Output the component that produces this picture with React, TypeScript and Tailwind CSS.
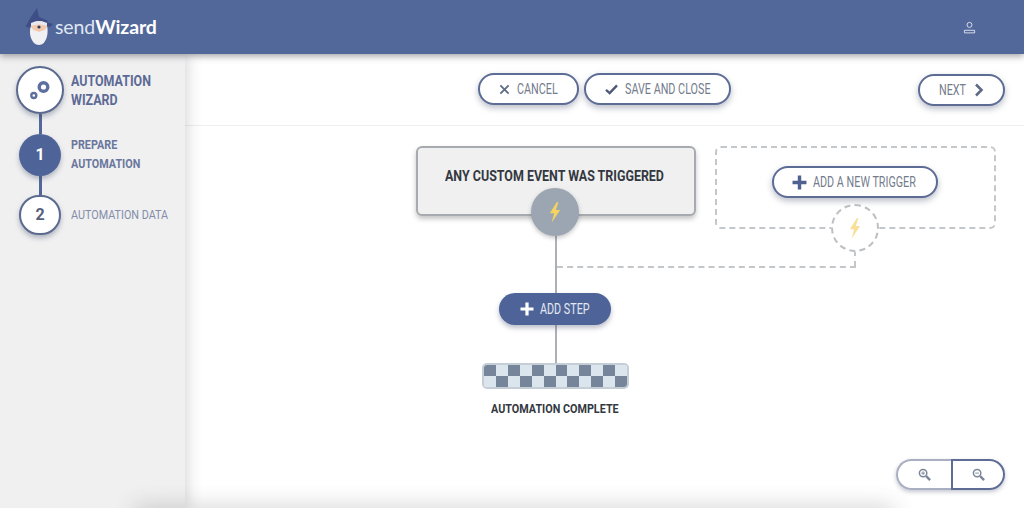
import React from "react";

const font = { fontFamily: "Roboto, 'Liberation Sans', sans-serif" };

function Bolt({ className }: { className: string }) {
  return (
    <svg viewBox="0 0 14 24" className={className} fill="currentColor">
      <path d="M9 0 L1 13 L6 13 L3 24 L13 9 L8 9 L11 0 Z" />
    </svg>
  );
}

function Plus({ className }: { className: string }) {
  return (
    <svg viewBox="0 0 14 14" className={className} fill="currentColor">
      <path d="M5.4 0.5 h3.2 v4.9 h4.9 v3.2 h-4.9 v4.9 h-3.2 v-4.9 h-4.9 v-3.2 h4.9 z" />
    </svg>
  );
}

function Zoom({ minus }: { minus?: boolean }) {
  return (
    <svg viewBox="0 0 14 14" className="w-[13px] h-[13px] text-[#7b8699]" fill="none" stroke="currentColor">
      <circle cx="5.5" cy="5.5" r="4" strokeWidth="1.6" />
      <path d="M8.8 8.8 L13 13" strokeWidth="2.6" />
      <path d={minus ? "M3.5 5.5 h4" : "M3.5 5.5 h4 M5.5 3.5 v4"} strokeWidth="1" />
    </svg>
  );
}

function Logo() {
  return (
    <svg viewBox="0 0 30 38" className="w-[30px] h-[38px] shrink-0">
      <path d="M12 0 L4 12 L1 18 L8 17 L24 13 L14 9 Z" fill="#3d4f86" />
      <path d="M0 18 Q14 10 28 16 L25 19 Q14 15 4 20 Z" fill="#3d4f86" />
      <ellipse cx="14" cy="19" rx="8" ry="6" fill="#f2c9ad" />
      <path d="M6 18 C3 26 7 37 14 37 C21 37 24 26 22 18 C20 24 17 22 14 24 C11 22 8 24 6 18 Z" fill="#f1f1f3" />
      <path d="M6 15 Q14 11 22 15 L22 18 Q14 15 6 18 Z" fill="#e8e8ee" />
      <circle cx="14" cy="19" r="1.6" fill="#2f3a5e" />
    </svg>
  );
}

const pill =
  "flex items-center justify-center rounded-full border-2 border-[#5d6c94] bg-white h-[32px] shadow-[0_3px_6px_rgba(60,70,100,0.35)] text-[#747c8c] text-[14px]";
const narrow = "block whitespace-nowrap origin-left scale-x-[0.83] text-left";
const narrowPill = "block whitespace-nowrap origin-left scale-x-[0.77] text-left";

function Checker() {
  const cells = Array.from({ length: 24 }, (_, i) => i);
  return (
    <div className="grid grid-cols-12 grid-rows-2 w-full h-full rounded-[5px] overflow-hidden border-2 border-[#c5ced6]">
      {cells.map((i) => {
        const row = Math.floor(i / 12);
        const dark = (i + row) % 2 === 0;
        return <div key={i} className={dark ? "bg-[#76859a]" : "bg-[#dbe5ee]"} />;
      })}
    </div>
  );
}

export default function App() {
  return (
    <div className="w-[1024px] h-[508px] overflow-hidden flex flex-col bg-white relative" style={font}>
      <header className="relative z-20 h-[54px] shrink-0 bg-[#53689a] flex items-center pl-[25px] pr-[48px] shadow-[0_2px_7px_rgba(40,40,50,0.45)]">
        <Logo />
        <div className="text-[19.5px] leading-none text-[#dfe6f3] tracking-[-0.1px]" style={{ fontFamily: "Lato, sans-serif" }}>
          send<span className="font-bold text-white">Wizard</span>
        </div>
        <svg viewBox="0 0 14 14" className="ml-auto w-[13px] h-[13px] text-[#dfe4ef]" fill="none" stroke="currentColor" strokeWidth="1">
          <circle cx="7" cy="4.2" r="2.7" />
          <path d="M1.5 10 h11 v2.8 h-11 z" />
        </svg>
      </header>

      <div className="flex flex-1 min-h-0">
        <aside className="relative z-10 w-[185px] shrink-0 bg-[#f0f0f1] pt-[12px] pl-[16px] shadow-[2px_0_14px_rgba(60,60,60,0.22)]">
          <div className="flex items-center gap-[7px]">
            <div className="w-[48px] h-[48px] shrink-0 rounded-full bg-white border-2 border-[#5b6a8f] shadow-[0_3px_5px_rgba(60,70,100,0.35)] flex items-center justify-center">
              <svg viewBox="0 0 22 22" className="w-[22px] h-[22px]" fill="none" stroke="#5d6f9e">
                <circle cx="14.5" cy="8" r="4.3" strokeWidth="3.4" />
                <circle cx="4.8" cy="16.5" r="2.5" strokeWidth="2.4" />
              </svg>
            </div>
            <div className={`${narrow} pt-[1px] text-[15px] leading-[19px] font-bold text-[#5c6a94]`}>
              AUTOMATION
              <br />
              WIZARD
            </div>
          </div>
          <div className="ml-[22.5px] w-[3px] h-[20px] bg-[#53689a]" />
          <div className="flex items-center gap-[10px] ml-[3px]">
            <div className="w-[42px] h-[42px] shrink-0 rounded-full bg-[#4e6498] shadow-[0_3px_5px_rgba(60,70,100,0.35)] flex items-center justify-center text-white text-[16px] font-bold">
              1
            </div>
            <div className={`${narrow} pb-[2px] text-[13px] leading-[19px] font-bold text-[#6a769c]`}>
              PREPARE
              <br />
              AUTOMATION
            </div>
          </div>
          <div className="ml-[22.5px] w-[3px] h-[19px] bg-[#53689a]" />
          <div className="flex items-center gap-[10px] ml-[3px]">
            <div className="w-[42px] h-[40px] shrink-0 rounded-full bg-white border-2 border-[#5b6a8f] shadow-[0_3px_5px_rgba(60,70,100,0.35)] flex items-center justify-center text-[#55607c] text-[16px] font-bold">
              2
            </div>
            <div className={`${narrow} pb-[2px] text-[13px] leading-[19px] text-[#838da8]`}>AUTOMATION DATA</div>
          </div>
        </aside>

        <main className="relative flex-1 min-w-0 flex flex-col">
          <div className="relative h-[72px] shrink-0 border-b border-[#efefef] flex items-center justify-center gap-[5px] pb-[1px]">
            <button className={`${pill} w-[101px] gap-[7px]`}>
              <svg viewBox="0 0 12 12" className="w-[11px] h-[11px]" stroke="#5f6b86" strokeWidth="2" fill="none">
                <path d="M1.5 1.5 L10.5 10.5 M10.5 1.5 L1.5 10.5" />
              </svg>
              <span className={`${narrowPill} w-[41px]`}>CANCEL</span>
            </button>
            <button className={`${pill} w-[147px] gap-[7px]`}>
              <svg viewBox="0 0 14 12" className="w-[13px] h-[11px]" stroke="#4f5a77" strokeWidth="2.6" fill="none">
                <path d="M1 6.5 L5 10 L13 1.5" />
              </svg>
              <span className={`${narrowPill} w-[86px]`}>SAVE AND CLOSE</span>
            </button>
            <button className={`${pill} w-[87px] gap-[8px] absolute right-[19px] top-[20px]`}>
              <span className={`${narrowPill} w-[27px]`}>NEXT</span>
              <svg viewBox="0 0 10 14" className="w-[10px] h-[14px]" stroke="#5f6b86" strokeWidth="2.6" fill="none">
                <path d="M2 1.5 L7.5 7 L2 12.5" />
              </svg>
            </button>
          </div>

          <div className="relative flex-1">
            {/* connectors */}
            <div className="absolute left-[370px] top-[110px] w-[2px] h-[127px] bg-[#adb1b6]" />
            <div className="absolute left-[372px] top-[140px] w-[299px] h-[2px] border-t-2 border-dashed border-[#c4c7ca]" />
            <div className="absolute left-[669px] top-[124px] h-[17px] w-[2px] border-l-2 border-dashed border-[#c4c7ca]" />

            {/* trigger node */}
            <div className="absolute left-[231px] top-[20px] w-[280px] h-[70px] rounded-[6px] border-2 border-[#a7abb0] bg-[#f0f0f0] shadow-[0_3px_5px_rgba(60,60,60,0.3)] flex justify-center pt-[18px]">
              <span className={`${narrow} w-[223px] text-[15px] leading-[20px] font-bold text-[#333840]`}>ANY CUSTOM EVENT WAS TRIGGERED</span>
            </div>
            <div className="absolute left-[346px] top-[62px] w-[48px] h-[48px] rounded-full bg-[#9ba6b2] shadow-[0_2px_4px_rgba(60,60,60,0.3)] flex items-center justify-center">
              <Bolt className="w-[12px] h-[21px] text-[#f4d35e]" />
            </div>

            {/* add a trigger node */}
            <div className="absolute left-[530px] top-[20px] w-[281px] h-[83px] rounded-[6px] border-2 border-dashed border-[#c4c7ca]" />
            <button className={`${pill} absolute left-[587px] top-[40px] w-[166px] gap-[6px]`}>
              <Plus className="w-[15px] h-[15px] text-[#4f6091]" />
              <span className={`${narrowPill} w-[106px]`}>ADD A NEW TRIGGER</span>
            </button>
            <div className="absolute left-[646px] top-[78px] w-[48px] h-[48px] rounded-full bg-white border-2 border-dashed border-[#bcbfc3] flex items-center justify-center">
              <Bolt className="w-[12px] h-[21px] text-[#f9e09a]" />
            </div>

            {/* add step */}
            <button className="absolute left-[314px] top-[167px] w-[112px] h-[32px] rounded-full bg-[#4e6498] shadow-[0_3px_5px_rgba(60,70,100,0.35)] flex items-center justify-center gap-[6px] text-[#e3e8f2] text-[14px]">
              <Plus className="w-[14px] h-[14px] text-white" />
              <span className={`${narrowPill} w-[50px]`}>ADD STEP</span>
            </button>

            {/* finish */}
            <div className="absolute left-[297px] top-[237px] w-[147px] h-[26px]">
              <Checker />
            </div>
            <div className="absolute left-[306px] top-[275px] w-[128px] text-[13px] leading-[16px] font-bold text-[#333840]">
              <span className={narrow}>AUTOMATION COMPLETE</span>
            </div>

            {/* zoom */}
            <div className="absolute right-[19px] top-[333px] flex h-[31px] rounded-full shadow-[0_2px_4px_rgba(60,70,100,0.3)]">
              <button className="w-[55px] flex items-center justify-center bg-white rounded-l-full border-2 border-r-0 border-[#a9aec0]">
                <Zoom />
              </button>
              <button className="w-[54px] flex items-center justify-center bg-white rounded-r-full border-2 border-[#5f6c96]">
                <Zoom minus />
              </button>
            </div>
          </div>

          {/* fading bottom edge */}
          <div className="absolute z-20 left-[-50px] right-[130px] bottom-[-14px] h-[14px] shadow-[0_0_22px_rgba(70,70,70,0.3)]" />
        </main>
      </div>
    </div>
  );
}
